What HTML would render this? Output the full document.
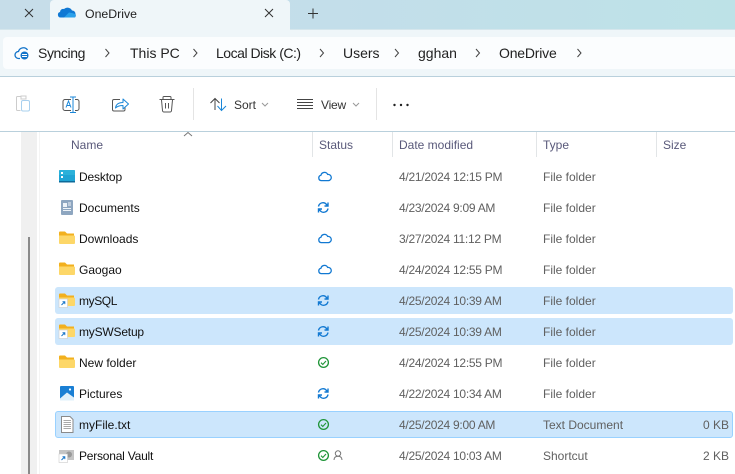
<!DOCTYPE html>
<html><head><meta charset="utf-8"><style>
html,body{margin:0;padding:0}
body{width:735px;height:474px;overflow:hidden;position:relative;background:#fff;font-family:"Liberation Sans",sans-serif;font-size:12px;color:#1b1b1b}
.a{position:absolute}
.t{position:absolute;white-space:nowrap;line-height:16px}
.ad{font-size:14px;top:45px;color:#222}
.ch{top:137px;color:#59597a}
.n{left:79px;color:#111}
.d{left:399px;color:#606060;letter-spacing:-.27px}
.y{left:543px;color:#606060}
.h{position:absolute;left:55px;width:678px;height:27px;background:#cce6fc;border-radius:3px}
.dv{position:absolute;top:132px;width:1px;height:25px;background:#e2e5e7}
svg{position:absolute;overflow:visible}
</style></head><body>
<div class="a" style="left:0;top:0;width:735px;height:29px;background:linear-gradient(90deg,#c6dde9,#c3deea 45%,#bde2e7)"></div>
<div class="a" style="left:50px;top:0;width:240px;height:29px;background:#eff6f9;border-radius:4px 4px 0 0"></div>
<div class="a" style="left:0;top:29px;width:735px;height:47px;background:#eff6f9;border-top:1px solid #d5e6ec;box-sizing:border-box"></div>
<div class="a" style="left:50px;top:29px;width:240px;height:1px;background:#eff6f9"></div>
<div class="a" style="left:3px;top:37px;width:732px;height:32px;background:#fbfdfe;border-radius:4px 0 0 4px"></div>
<div class="a" style="left:0;top:76px;width:735px;height:1px;background:#b9d0dc"></div>
<div class="a" style="left:0;top:131px;width:735px;height:1px;background:#b9d0dc"></div>

<svg style="left:0;top:0" width="735" height="132" fill="none">
<path d="M25 9l8 8M33 9l-8 8M265 9l8 8M273 9l-8 8" stroke="#333" stroke-width="1"/>
<path d="M308 13.500h10M313 8.500v10" stroke="#333" stroke-width="1"/>
<path d="M63 17.500h-2.500a2.800 2.800 0 0 1-.5-5.500 3.200 3.200 0 0 1 4-3 5 5 0 0 1 8 1.500 3.300 3.300 0 0 1 3.500 3.500 3.500 3.500 0 0 1-.5 3.500z" fill="#0f78d4"/>
<path d="M64 17.500l5-5 4 .8 2.500 1-.5 3.200z" fill="#2aa0ea"/>
<path d="M20 58.500h-1.500a3.500 3.500 0 0 1 0-7 5 5 0 0 1 9-1.500" stroke="#1273c9" stroke-width="1.300"/>
<circle cx="24.500" cy="55.500" r="4" fill="#1273c9"/>
<path d="M22 54.500h5M22 56.500h5" stroke="#fff" stroke-width=".9"/>
<path d="M105.500 49l3.500 4-3.500 4M193.500 49l3.500 4-3.500 4M320 49l3.500 4-3.500 4M395 49l3.500 4-3.500 4M476 49l3.500 4-3.500 4M577.500 49l3.500 4-3.500 4" stroke="#444" stroke-width="1"/>
<path d="M21 96.500h-3.500a1 1 0 0 0-1 1v12a1 1 0 0 0 1 1h3" stroke="#ccc"/>
<rect x="21" y="96" width="5" height="3" stroke="#ccc"/>
<rect x="21.500" y="100.500" width="8" height="10.500" rx="1.500" stroke="#a9d0ee"/>
<path d="M71 99.500h-6a2 2 0 0 0-2 2v7a2 2 0 0 0 2 2h6M75 99.500h2a2 2 0 0 1 2 2v7a2 2 0 0 1-2 2h-2" stroke="#555"/>
<path d="M70 97h6M73 97v15.500M70 112.500h6" stroke="#1b87d8"/>
<path d="M66 107.500l2.500-6.500 2.500 6.500M67 105.500h3" stroke="#1b87d8"/>
<path d="M120 99.500h-6a1.500 1.500 0 0 0-1.500 1.500v8.500a1.500 1.500 0 0 0 1.500 1.500h9.500a1.500 1.500 0 0 0 1.500-1.500v-2" stroke="#555"/>
<path d="M115.500 108c.5-4 3.500-5.500 7.500-5.500v-3.500l5.500 5-5.500 5v-3.500c-3.500 0-5.500.5-7.500 2.500z" stroke="#1b87d8" stroke-linejoin="round"/>
<path d="M159.500 99.500h15M163 99v-1.500a1 1 0 0 1 1-1h6a1 1 0 0 1 1 1v1.500M161.500 100l1 10.500a1.500 1.500 0 0 0 1.500 1.500h6a1.500 1.500 0 0 0 1.500-1.500l1-10.500M165.500 103v5.500M168.500 103v5.500" stroke="#555"/>
<path d="M193.500 88v32M376.500 88v32" stroke="#e4e4e4"/>
<path d="M215 110V98.500M210.500 103l4.500-4.500 4.500 4.500" stroke="#444"/>
<path d="M221.500 98.500V110M217.500 106l4 4.500 4.500-4.500" stroke="#1b87d8"/>
<path d="M262 103l3 3 3-3M353 103l3 3 3-3" stroke="#999"/>
<path d="M297 99.500h16M297 102.500h16M297 105.500h16M297 108.500h16" stroke="#444"/>
<circle cx="394.500" cy="105" r="1.200" fill="#222"/><circle cx="401" cy="105" r="1.200" fill="#222"/><circle cx="407.500" cy="105" r="1.200" fill="#222"/>
</svg>

<div class="t" style="left:85px;top:6px;font-size:12.300px;color:#1e1e1e">OneDrive</div>
<div class="t ad" style="left:38px;letter-spacing:-.4px">Syncing</div>
<div class="t ad" style="left:130px">This PC</div>
<div class="t ad" style="left:216px;letter-spacing:-.48px">Local Disk (C:)</div>
<div class="t ad" style="left:343px">Users</div>
<div class="t ad" style="left:418px">gghan</div>
<div class="t ad" style="left:499px;letter-spacing:-.2px">OneDrive</div>
<div class="t" style="left:234px;top:97px;color:#333">Sort</div>
<div class="t" style="left:321px;top:97px;color:#333;letter-spacing:-.2px">View</div>

<div class="a" style="left:21px;top:132px;width:16px;height:342px;background:#f0f0f0"></div>
<div class="a" style="left:28px;top:237px;width:2px;height:237px;background:#8a8a8a"></div>
<div class="a" style="left:39px;top:132px;width:1px;height:342px;background:#f4f4f4"></div>

<svg style="left:0;top:0" width="735" height="135" fill="none"><path d="M184 136l4-3.500 4 3.500" stroke="#777"/></svg>
<div class="t ch" style="left:71px">Name</div>
<div class="t ch" style="left:319px">Status</div>
<div class="t ch" style="left:399px">Date modified</div>
<div class="t ch" style="left:543px">Type</div>
<div class="t ch" style="left:663px">Size</div>
<div class="dv" style="left:312px"></div><div class="dv" style="left:392px"></div><div class="dv" style="left:536px"></div><div class="dv" style="left:656px"></div>

<div class="h" style="top:287px"></div>
<div class="h" style="top:318px"></div>
<div class="h" style="top:411px;box-sizing:border-box;border:1px solid #99d1ff"></div>

<svg style="left:0;top:0" width="735" height="474" fill="none">
<defs>
<g id="f"><path d="M0 2.500a1 1 0 0 1 1-1h5l2 2h7v2.500H0z" fill="#f2b01e"/><path d="M0 5.500h15a1 1 0 0 1 1 1V13a1 1 0 0 1-1 1H1a1 1 0 0 1-1-1z" fill="#fdd768"/></g>
<g id="s"><rect x="0" y="7" width="8.500" height="8.500" fill="#fff" stroke="#ccc" stroke-width=".6"/><path d="M2.500 13l3-3M3.500 9.800h2.300v2.300" stroke="#1a76c8" stroke-width="1"/></g>
<path id="c" transform="scale(.92)" d="M3.500 10.500a3 3 0 0 1-.3-5.900 3.900 3.900 0 0 1 7.300-.9 3.400 3.400 0 0 1 1 6.800z" stroke="#1279d2" stroke-width="1.400"/>
<g id="r" stroke="#1279d2" stroke-width="1.400"><path d="M1 5.500a4.500 4.500 0 0 1 8-2l1.500 1.500M10.500 1.500V5H7"/><path d="M10.500 7.500a4.500 4.500 0 0 1-8 2L1 8M1 11.500V8h3.500"/></g>
<g id="k"><circle cx="5.500" cy="5.500" r="4.900" stroke="#1e9437" stroke-width="1.300"/><path d="M3 5.700l1.800 1.800L8 4" stroke="#1e9437" stroke-width="1.100"/></g>
</defs>
<!-- row icons -->
<path d="M59 171a1 1 0 0 1 1-1h14a1 1 0 0 1 1 1v10.500H59z" fill="#1fa4d4"/><path d="M59 170h16v5H59z" fill="#38bde0" opacity=".5"/><path d="M59 181h16v1.500H59z" fill="#0d6a99"/><path d="M61 172h2v2h-2zM61 176h2v2h-2z" fill="#fff"/>
<rect x="61" y="200" width="12" height="15" rx="1" fill="#8ea6c0"/><path d="M63 203h4v4h-4z" fill="#eef3f8"/><path d="M68 203h3M68 205h3M63 208.500h8M63 210.500h8" stroke="#eef3f8"/>
<use href="#f" x="59" y="230"/><use href="#f" x="59" y="261"/>
<use href="#f" x="59" y="292"/><use href="#s" x="59" y="292"/>
<use href="#f" x="59" y="323"/><use href="#s" x="59" y="323"/>
<use href="#f" x="59" y="354"/>
<rect x="60" y="386" width="14" height="14.500" rx="1" fill="#1a7fd4"/><path d="M60 398.500l7-6 7 5v3H60z" fill="#dff0fb"/><circle cx="70" cy="389.500" r="1.100" fill="#fff"/>
<path d="M61.500 416.500h8.500l3 3v13h-11.500z" fill="#fff" stroke="#8a8a8a"/><path d="M63.500 420.500h7.500M63.500 422.500h7.500M63.500 424.500h7.500M63.500 426.500h7.500M63.500 428.500h7.500" stroke="#a9a9a9"/>
<rect x="59" y="450" width="15" height="10" fill="#c4c4c4"/><circle cx="69" cy="454.500" r="3" fill="#999"/><use href="#s" x="59" y="447"/>
<!-- status -->
<use href="#c" x="318" y="171"/><use href="#r" x="317.500" y="201"/><use href="#c" x="318" y="233"/><use href="#c" x="318" y="264"/>
<use href="#r" x="317.500" y="294"/><use href="#r" x="317.500" y="325"/>
<use href="#k" x="318" y="357"/><use href="#r" x="317.500" y="387"/><use href="#k" x="318" y="419"/><use href="#k" x="318" y="450"/>
<circle cx="338" cy="453.500" r="2.700" stroke="#777"/><path d="M334 460c0-3 2-3.800 4-3.800s4 .8 4 3.800" stroke="#777"/>
</svg>

<div class="t n" style="top:169px;letter-spacing:-.15px">Desktop</div><div class="t d" style="top:169px">4/21/2024 12:15 PM</div><div class="t y" style="top:169px">File folder</div>
<div class="t n" style="top:200px">Documents</div><div class="t d" style="top:200px">4/23/2024 9:09 AM</div><div class="t y" style="top:200px">File folder</div>
<div class="t n" style="top:231px">Downloads</div><div class="t d" style="top:231px">3/27/2024 11:12 PM</div><div class="t y" style="top:231px">File folder</div>
<div class="t n" style="top:262px">Gaogao</div><div class="t d" style="top:262px">4/24/2024 12:55 PM</div><div class="t y" style="top:262px">File folder</div>
<div class="t n" style="top:293px;letter-spacing:-.4px">mySQL</div><div class="t d" style="top:293px">4/25/2024 10:39 AM</div><div class="t y" style="top:293px">File folder</div>
<div class="t n" style="top:324px;letter-spacing:-.2px">mySWSetup</div><div class="t d" style="top:324px">4/25/2024 10:39 AM</div><div class="t y" style="top:324px">File folder</div>
<div class="t n" style="top:355px">New folder</div><div class="t d" style="top:355px">4/24/2024 12:55 PM</div><div class="t y" style="top:355px">File folder</div>
<div class="t n" style="top:386px">Pictures</div><div class="t d" style="top:386px">4/22/2024 10:34 AM</div><div class="t y" style="top:386px">File folder</div>
<div class="t n" style="top:417px">myFile.txt</div><div class="t d" style="top:417px">4/25/2024 9:00 AM</div><div class="t y" style="top:417px">Text Document</div><div class="t" style="right:6px;top:417px;color:#606060">0 KB</div>
<div class="t n" style="top:448px;letter-spacing:-.22px">Personal Vault</div><div class="t d" style="top:448px">4/25/2024 10:03 AM</div><div class="t y" style="top:448px">Shortcut</div><div class="t" style="right:6px;top:448px;color:#606060">2 KB</div>
</body></html>
